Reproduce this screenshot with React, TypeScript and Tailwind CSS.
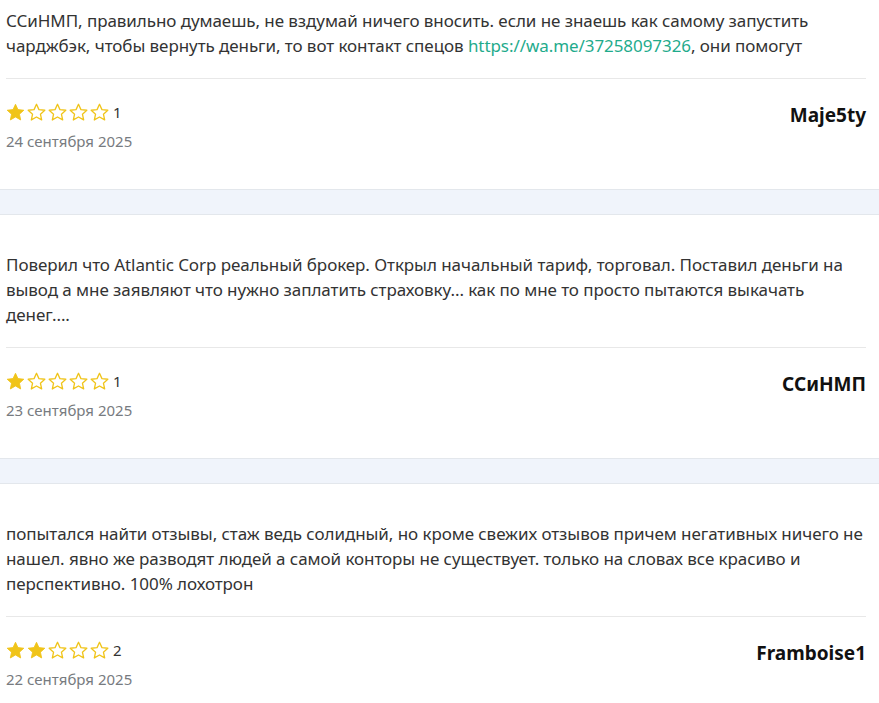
import React from "react";

const Star = ({ filled }: { filled: boolean }) => (
  <svg width="21" height="21" viewBox="0 0 24 24" className="shrink-0">
    <polygon
      points="12,2.6 14.8,8.7 21.5,9.4 16.5,13.9 17.9,20.5 12,17.1 6.1,20.5 7.5,13.9 2.5,9.4 9.2,8.7"
      fill={filled ? "#f0c419" : "none"}
      stroke="#f0c419"
      strokeWidth={filled ? 1 : 1.5}
      strokeLinejoin="round"
    />
  </svg>
);

type R = {
  text: React.ReactNode;
  rating: number;
  name: string;
  date: string;
  first?: boolean;
};

const Review = ({ text, rating, name, date, first }: R) => (
  <div className={`pl-[6px] pr-[13px] ${first ? "pt-[8px]" : "pt-[37px]"} pb-[38px]`}>
    <p className="text-[17px] leading-[25px] tracking-[-0.07px] whitespace-nowrap text-[#333333]">{text}</p>
    <div className="mt-[20px] border-t border-[#e8e8e8]" />
    <div className="flex justify-between items-start pt-[21px]">
      <div className="flex flex-col">
        <div className="flex items-center h-[24px] -ml-[1px]">
          {[0, 1, 2, 3, 4].map((i) => (
            <Star key={i} filled={i < rating} />
          ))}
          <span className="ml-[3px] text-[15px] text-[#333333]">{rating}</span>
        </div>
        <div className="mt-[7px] text-[15px] leading-[20px] text-[#777b80]">{date}</div>
      </div>
      <div className="mt-[3px] text-[19px] leading-[24px] font-bold text-[#111111]">{name}</div>
    </div>
  </div>
);

const Band = () => <div className="h-[26px] bg-[#f0f4fb] border-y border-[#e3e7ec]" />;

export default function App() {
  return (
    <div className="w-[879px] bg-white" style={{ fontFamily: '"Noto Sans", "Open Sans", sans-serif' }}>
      <Review
        first
        text={
          <>
            ССиНМП, правильно думаешь, не вздумай ничего вносить. если не знаешь как самому запустить
            <br />
            чарджбэк, чтобы вернуть деньги, то вот контакт спецов{" "}
            <a className="text-[#1fab8c]">https://wa.me/37258097326</a>, они помогут
          </>
        }
        rating={1}
        name="Maje5ty"
        date="24 сентября 2025"
      />
      <Band />
      <Review
        text={
          <>
            Поверил что Atlantic Corp реальный брокер. Открыл начальный тариф, торговал. Поставил деньги на
            <br />
            вывод а мне заявляют что нужно заплатить страховку... как по мне то просто пытаются выкачать
            <br />
            денег....
          </>
        }
        rating={1}
        name="ССиНМП"
        date="23 сентября 2025"
      />
      <Band />
      <Review
        text={
          <>
            попытался найти отзывы, стаж ведь солидный, но кроме свежих отзывов причем негативных ничего не
            <br />
            нашел. явно же разводят людей а самой конторы не существует. только на словах все красиво и
            <br />
            перспективно. 100% лохотрон
          </>
        }
        rating={2}
        name="Framboise1"
        date="22 сентября 2025"
      />
    </div>
  );
}
